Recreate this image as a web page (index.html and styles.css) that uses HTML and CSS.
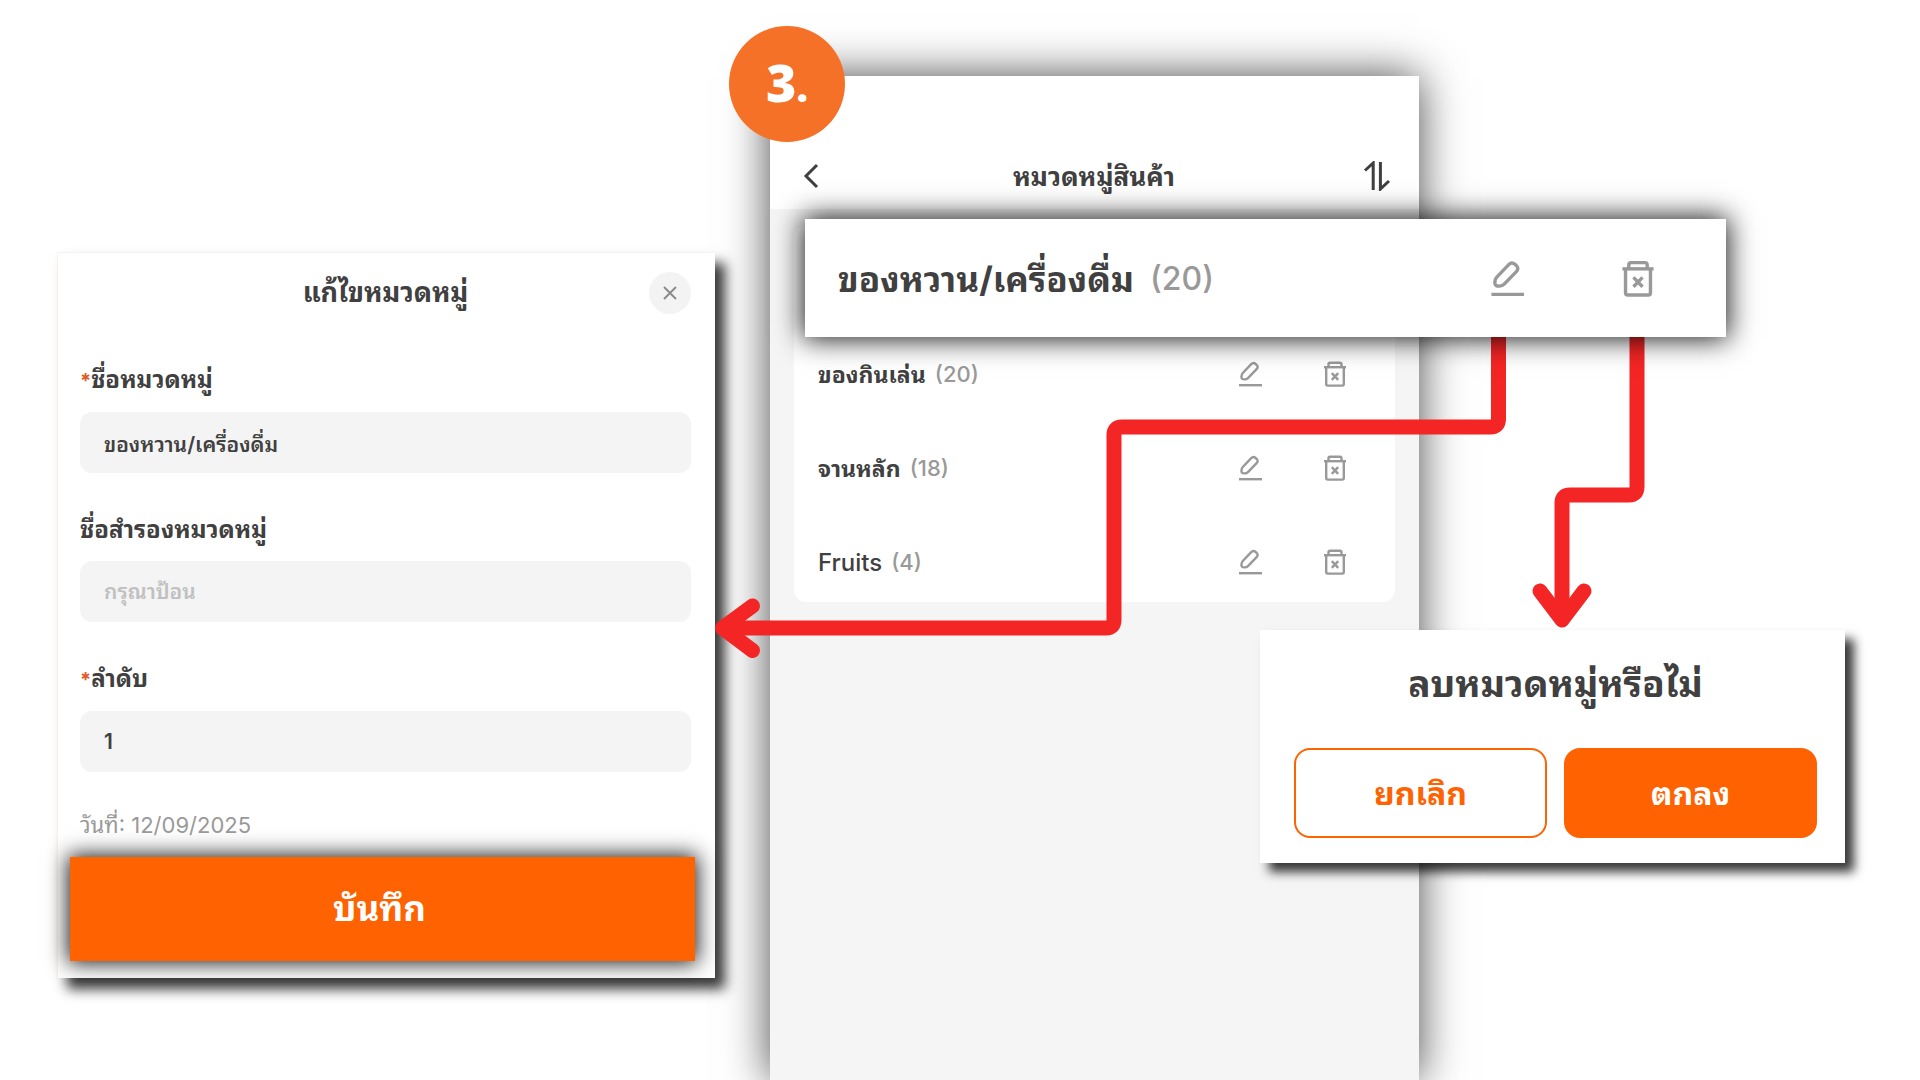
FILE: index.html
```
<!DOCTYPE html>
<html lang="th">
<head>
  <meta charset="UTF-8" />
  <meta name="viewport" content="width=device-width, initial-scale=1.0"/>
  <title>หมวดหมู่สินค้า</title>
  <link rel="stylesheet" href="styles.css">
</head>
<body>
  <svg class="sprite" aria-hidden="true">
    <symbol id="icon-edit" viewBox="0 0 24 26">
      <path d="M4.8 12 L13.2 3.2 Q15.4 1 17.6 3 L18.6 3.9 Q20.7 5.9 18.6 8.1 L10.2 16.8 Q8.8 18.3 6.6 18.4 Q3.4 18.6 3.4 15.8 Q3.4 13.5 4.8 12 Z"/>
      <path d="M1 24.2 H24"/>
    </symbol>
    <symbol id="icon-delete" viewBox="0 0 24 26">
      <path d="M5.5 6 V3.4 Q5.5 1.8 7.1 1.8 H16.9 Q18.5 1.8 18.5 3.4 V6"/>
      <path d="M1 6.2 H23"/>
      <path d="M3.2 6.2 V23 Q3.2 24.6 4.8 24.6 H19.2 Q20.8 24.6 20.8 23 V6.2"/>
      <path d="M8.8 12.2 L15.2 18.8 M15.2 12.2 L8.8 18.8"/>
    </symbol>
  </svg>

  <main class="board">
    <form class="panel">
      <header class="panel-header">
        <h2>แก้ไขหมวดหมู่</h2>
        <button type="button" class="close" aria-label="ปิด">
          <svg viewBox="0 0 14 14"><path d="M1 1 L13 13 M13 1 L1 13"/></svg>
        </button>
      </header>
      <div class="field">
        <label for="name"><span class="required">*</span>ชื่อหมวดหมู่</label>
        <input type="text" id="name" value="ของหวาน/เครื่องดื่ม" />
      </div>
      <div class="field">
        <label for="altName">ชื่อสำรองหมวดหมู่</label>
        <input type="text" id="altName" placeholder="กรุณาป้อน" />
      </div>
      <div class="field">
        <label for="order"><span class="required">*</span>ลำดับ</label>
        <input type="text" id="order" value="1" />
      </div>
      <p class="date">วันที่: 12/09/2025</p>
      <button type="button" class="save">บันทึก</button>
    </form>

    <section class="phone">
      <span class="step">3<span class="step-dot">.</span></span>
      <header class="phone-header">
        <button type="button" class="icon-button" aria-label="กลับ">
          <svg class="icon-back" viewBox="0 0 16 26"><path d="M14 2 L3 13 L14 24"/></svg>
        </button>
        <h1>หมวดหมู่สินค้า</h1>
        <button type="button" class="icon-button" aria-label="เรียงลำดับ">
          <svg class="icon-sort" viewBox="0 0 28 30"><path d="M2 9.5 L10.2 2 V29 M17.4 1 V28 L26 20"/></svg>
        </button>
      </header>
      <ul class="list">
        <li class="row highlight">
          <span class="name">ของหวาน/เครื่องดื่ม</span>
          <span class="count">(20)</span>
          <button type="button" class="icon-button" aria-label="แก้ไข"><svg class="icon"><use href="#icon-edit"/></svg></button>
          <button type="button" class="icon-button" aria-label="ลบ"><svg class="icon"><use href="#icon-delete"/></svg></button>
        </li>
        <li class="row">
          <span class="name">ของกินเล่น</span>
          <span class="count">(20)</span>
          <button type="button" class="icon-button" aria-label="แก้ไข"><svg class="icon"><use href="#icon-edit"/></svg></button>
          <button type="button" class="icon-button" aria-label="ลบ"><svg class="icon"><use href="#icon-delete"/></svg></button>
        </li>
        <li class="row">
          <span class="name">จานหลัก</span>
          <span class="count">(18)</span>
          <button type="button" class="icon-button" aria-label="แก้ไข"><svg class="icon"><use href="#icon-edit"/></svg></button>
          <button type="button" class="icon-button" aria-label="ลบ"><svg class="icon"><use href="#icon-delete"/></svg></button>
        </li>
        <li class="row">
          <span class="name latin">Fruits</span>
          <span class="count">(4)</span>
          <button type="button" class="icon-button" aria-label="แก้ไข"><svg class="icon"><use href="#icon-edit"/></svg></button>
          <button type="button" class="icon-button" aria-label="ลบ"><svg class="icon"><use href="#icon-delete"/></svg></button>
        </li>
      </ul>
    </section>

    <svg class="arrows" viewBox="0 0 1920 1080" preserveAspectRatio="xMinYMin meet" aria-hidden="true">
      <path d="M1498.5 330 V419 Q1498.5 427 1490.5 427 H1122 Q1114 427 1114 435 V620 Q1114 628 1106 628 H724"/>
      <path d="M752.5 606 L722.5 628 L752.5 650.5"/>
      <path d="M1637 330 V487 Q1637 495 1629 495 H1570 Q1562 495 1562 503 V618"/>
      <path d="M1540 591 L1562 620 L1584 591"/>
    </svg>

    <section class="dialog">
      <h2>ลบหมวดหมู่หรือไม่</h2>
      <div class="dialog-buttons">
        <button type="button" class="cancel">ยกเลิก</button>
        <button type="button" class="confirm">ตกลง</button>
      </div>
    </section>
  </main>
</body>
</html>
```
FILE: styles.css
```
* {
  box-sizing: border-box;
}
body {
  margin: 0;
  background-color: #fff;
  color: #404040;
  font-family: Inter, "Noto Sans Thai Looped", Loma, "Noto Sans Thai", "Noto Sans", sans-serif;
}
h1, h2, p, ul {
  margin: 0;
  padding: 0;
}
button, input {
  font-family: inherit;
}
button {
  border: none;
  cursor: pointer;
}
.sprite {
  display: none;
}
.board {
  position: relative;
  display: grid;
  grid-template-columns: 57fr 658fr 55fr 649fr 501fr;
  min-height: 100vh;
  overflow: hidden;
}

/* edit form */
.panel {
  grid-column: 2;
  align-self: start;
  margin-top: 252px;
  padding: 19px 24px 17px 22px;
  background-color: #fff;
  border-left: 1px solid #fdeee8;
  border-top: 1px solid #f7f3f1;
  box-shadow: 10px 11px 12px rgba(0, 0, 0, 0.78);
  z-index: 1;
}
.panel-header {
  display: grid;
  grid-template-columns: 42px 1fr 42px;
  align-items: center;
  margin-bottom: 51px;
}
.panel-header h2 {
  grid-column: 2;
  font-size: 27px;
  line-height: 42px;
  text-align: center;
}
.close {
  display: flex;
  align-items: center;
  justify-content: center;
  height: 42px;
  padding: 0;
  border-radius: 50%;
  background-color: #f3f3f3;
}
.close svg {
  width: 14px;
  height: 14px;
  fill: none;
  stroke: #8c8c8c;
  stroke-width: 2;
}
.field {
  display: flex;
  flex-direction: column;
  gap: 16px;
  margin-bottom: 42px;
}
.field label {
  font-size: 24px;
  font-weight: bold;
  line-height: 30px;
}
.required {
  color: #e0592a;
  font-size: 20px;
}
.field input {
  width: 100%;
  height: 61px;
  padding: 0 24px;
  border: none;
  border-radius: 12px;
  background-color: #f4f4f4;
  color: #404040;
  font-size: 21px;
  font-weight: 600;
}
.field input::placeholder {
  color: #c0c0c0;
}
.date {
  margin: -4px 0 17px;
  color: #999;
  font-size: 22px;
  line-height: 30px;
}
.save {
  display: block;
  width: calc(100% + 14px);
  height: 104px;
  margin-left: -10px;
  padding: 0 6px 8px 0;
  background-color: #ff6200;
  color: #fff;
  font-size: 35px;
  font-weight: bold;
  box-shadow: 0 0 20px 2px rgba(0, 0, 0, 0.9);
}

/* category list */
.phone {
  position: relative;
  grid-column: 4;
  margin-top: 76px;
  background-color: #f5f5f5;
  box-shadow: 0 0 42px rgba(0, 0, 0, 0.72);
}
.step {
  position: absolute;
  top: -50px;
  left: -41px;
  width: 116px;
  height: 116px;
  border-radius: 50%;
  background-color: #f57128;
  color: #fff;
  font-family: "Noto Sans", sans-serif;
  font-size: 52px;
  font-weight: 900;
  line-height: 112px;
  text-align: center;
}
.step-dot {
  font-size: 40px;
}
.phone-header {
  display: flex;
  align-items: center;
  justify-content: space-between;
  height: 133px;
  padding: 66px 28px 0 33px;
  background-color: #fff;
}
.phone-header h1 {
  padding: 0 0 4px 6px;
  font-size: 26px;
}
.icon-button {
  display: flex;
  padding: 0;
  background: none;
}
.icon-button svg {
  fill: none;
  stroke: #404040;
  stroke-width: 3;
}
.icon-back {
  width: 16px;
  height: 26px;
}
.icon-sort {
  width: 28px;
  height: 30px;
}
.list {
  display: flex;
  flex-direction: column;
  gap: 14px;
  margin: 17px 24px 0;
  border-radius: 12px;
  background-color: #fff;
  list-style: none;
}
.row {
  display: flex;
  align-items: center;
  height: 80px;
  padding: 0 48px 0 24px;
  font-size: 23px;
}
.name {
  padding-bottom: 4px;
  font-weight: bold;
}
.latin {
  padding-bottom: 0;
  font-size: 24px;
  font-weight: 500;
}
.count {
  margin: 0 auto 0 9px;
  color: #999;
  font-size: 22px;
  font-weight: 500;
}
.icon-button .icon {
  width: 24px;
  height: 26px;
  stroke: #999;
  stroke-width: 2.4;
}
.row .icon-button + .icon-button {
  margin-left: 61px;
}
.highlight {
  position: relative;
  z-index: 3;
  height: 118px;
  margin: -7px -331px -17px 11px;
  padding: 0 71px 0 33px;
  background-color: #fff;
  font-size: 35px;
  box-shadow: 0 0 26px 2px rgba(0, 0, 0, 0.9);
}
.highlight .count {
  margin-left: 16px;
  font-size: 32px;
}
.highlight .icon-button .icon {
  width: 34px;
  height: 37px;
}
.highlight .icon-button + .icon-button {
  margin-left: 97px;
}

.arrows {
  position: absolute;
  top: 0;
  left: 0;
  z-index: 2;
  width: 100%;
  fill: none;
  stroke: #f42525;
  stroke-width: 15;
  stroke-linecap: round;
  stroke-linejoin: round;
}

/* delete confirmation */
.dialog {
  position: absolute;
  top: 630px;
  right: 75px;
  z-index: 3;
  width: 585px;
  padding: 24px 28px 25px 34px;
  background-color: #fff;
  box-shadow: 9px 9px 10px rgba(0, 0, 0, 0.78);
}
.dialog h2 {
  font-size: 37px;
  line-height: 60px;
  text-align: center;
}
.dialog-buttons {
  display: flex;
  gap: 17px;
  margin-top: 34px;
}
.dialog-buttons button {
  flex: 1;
  height: 90px;
  padding-bottom: 6px;
  border: 2px solid #ff6200;
  border-radius: 16px;
  font-size: 32px;
  font-weight: bold;
}
.cancel {
  background-color: #fff;
  color: #ff6200;
}
.confirm {
  background-color: #ff6200;
  color: #fff;
}
```
